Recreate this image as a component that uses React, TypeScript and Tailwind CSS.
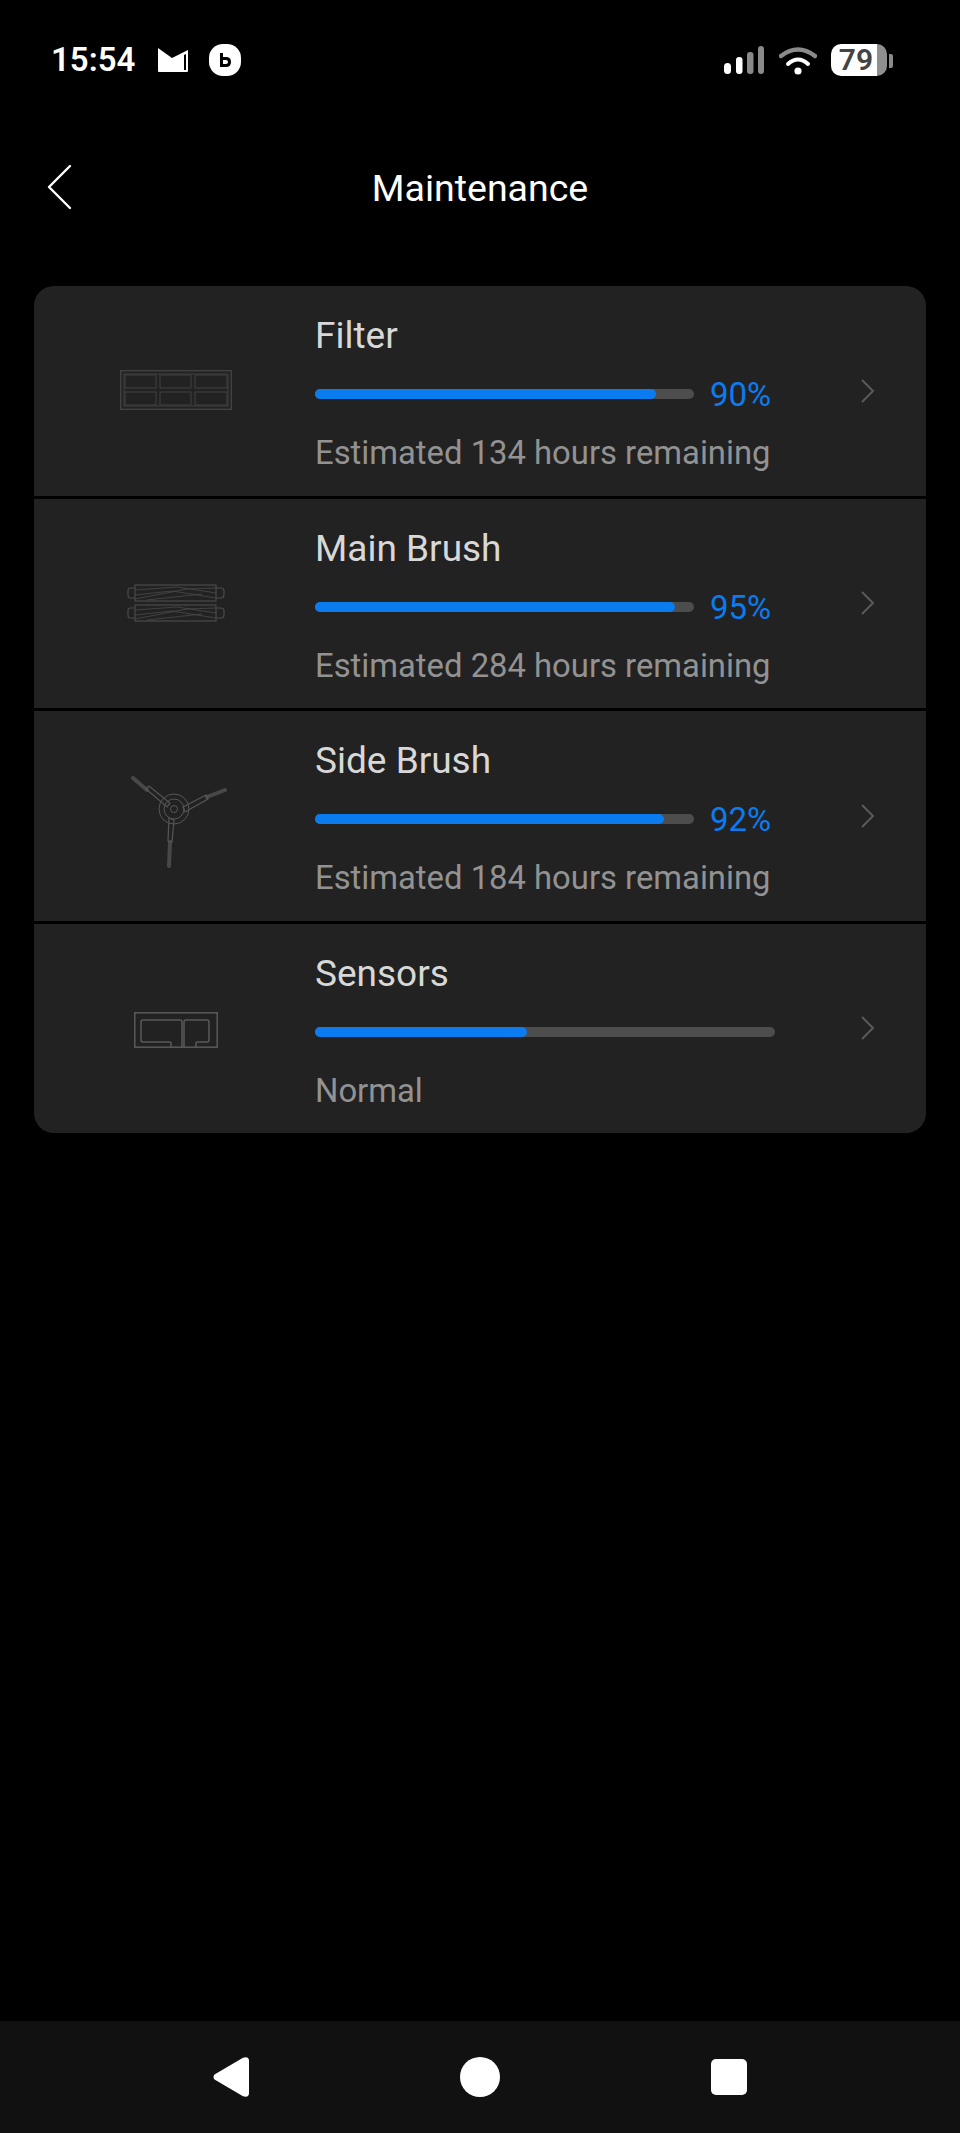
const rows = [
  { title: 'Filter', percent: 90, label: '90%', note: 'Estimated 134 hours remaining', icon: <FilterIcon /> },
  { title: 'Main Brush', percent: 95, label: '95%', note: 'Estimated 284 hours remaining', icon: <MainBrushIcon /> },
  { title: 'Side Brush', percent: 92, label: '92%', note: 'Estimated 184 hours remaining', icon: <SideBrushIcon /> },
  { title: 'Sensors', percent: 46, label: '', note: 'Normal', icon: <SensorsIcon /> },
];

function FilterIcon() {
  return (
    <svg className="mb-[2px]" width="112" height="40" viewBox="0 0 112 40" fill="none" stroke="#414141" strokeWidth="1.4">
      <rect x="0.7" y="0.7" width="110.6" height="38.6" />
      <rect x="4" y="4" width="104" height="32" strokeWidth="1" />
      <rect x="5" y="5" width="31" height="13" strokeWidth="1" />
      <rect x="40" y="5" width="31" height="13" strokeWidth="1" />
      <rect x="75" y="5" width="32" height="13" strokeWidth="1" />
      <rect x="5" y="22" width="31" height="13" strokeWidth="1" />
      <rect x="40" y="22" width="31" height="13" strokeWidth="1" />
      <rect x="75" y="22" width="32" height="13" strokeWidth="1" />
    </svg>
  );
}

function MainBrushIcon() {
  return (
    <svg width="98" height="38" viewBox="0 0 98 38" fill="none" stroke="#4a4a4a" strokeWidth="1.2">
      {[0, 20].map((y) => (
        <g key={y} transform={`translate(0 ${y})`}>
          <rect x="8" y="1" width="81" height="16" />
          <path d="M8 6 L50 3 L89 9 M8 11 L45 7 L89 14 M8 15 L60 5 L89 4 M20 16 L75 10" strokeWidth="0.8" />
          <path d="M8 4 H3 Q1 4 1 7 V11 Q1 14 3 14 H8" />
          <path d="M89 4 H94 Q97 4 97 7 V11 Q97 14 94 14 H89" />
        </g>
      ))}
    </svg>
  );
}

function SideBrushIcon() {
  return (
    <svg className="ml-[6px] mt-[13px]" width="96" height="92" viewBox="0 0 96 92" fill="none" stroke="#565656">
      <circle cx="43" cy="33" r="15" strokeWidth="1" />
      <circle cx="43" cy="33" r="10" strokeWidth="1" />
      <circle cx="43" cy="33" r="3.5" strokeWidth="1" />
      <path d="M2 2 L16 14" strokeWidth="4" stroke="#484848" strokeLinecap="round" />
      <path d="M15 13 L18 10 L39 27 L36 31 Z" strokeWidth="1.2" />
      <path d="M76 21 L94 14" strokeWidth="4" stroke="#484848" strokeLinecap="round" />
      <path d="M52 31 L75 19 L77 23 L54 36 Z" strokeWidth="1.2" />
      <path d="M39 66 L38 90" strokeWidth="4" stroke="#484848" strokeLinecap="round" />
      <path d="M38 42 L43 44 L41 66 L37 65 Z" strokeWidth="1.2" />
    </svg>
  );
}

function SensorsIcon() {
  return (
    <svg className="mt-[4px]" width="84" height="36" viewBox="0 0 84 36" fill="none" stroke="#5a5a5a" strokeWidth="1.5">
      <rect x="0.8" y="0.8" width="82.4" height="34.4" />
      <path d="M37 35 V31 Q37 30 36 30 H9 Q7 30 7 28 V10 Q7 8 9 8 H46 Q48 8 48 10 V35" />
      <path d="M50 35 V10 Q50 8 52 8 H73 Q75 8 75 10 V28 Q75 30 73 30 H63 Q62 30 62 31 V35" />
    </svg>
  );
}

function StatusBar() {
  return (
    <div className="flex h-[120px] shrink-0 items-start justify-between pl-[51px] pr-[67px] pt-[44px]">
      <div className="flex items-center">
        <span className="text-[33px] leading-[32px] font-semibold text-white">15:54</span>
        <svg className="ml-[22px]" width="32" height="26" viewBox="0 0 32 26">
          <path d="M1 1 L15 11 L31 3 V24 Q31 25 30 25 H2 Q1 25 1 24 Z" fill="#fff" />
          <path d="M27 8 L29 7 V23 H27 Z" fill="#000" />
        </svg>
        <div className="ml-[20px] flex h-[32px] w-[32px] items-center justify-center rounded-[14px] bg-white">
          <svg width="12" height="14" viewBox="0 0 12 14">
            <path d="M1 0 H4 V4 H7 Q12 4 12 9 Q12 14 7 14 H1 Z M4 7 V11 H7 Q9 11 9 9 Q9 7 7 7 Z" fill="#000" fillRule="evenodd" />
          </svg>
        </div>
      </div>
      <div className="flex items-start">
        <svg width="40" height="28" viewBox="0 0 40 28" className="mt-[2px]">
          <rect x="0" y="17" width="7" height="11" rx="3.5" fill="#fff" />
          <rect x="12" y="11" width="6.5" height="17" rx="3" fill="#fff" />
          <rect x="23" y="6" width="6.5" height="22" rx="3" fill="#8a8a8a" />
          <rect x="34" y="0" width="6" height="28" rx="3" fill="#8a8a8a" />
        </svg>
        <svg className="ml-[15px] mt-[2px]" width="38" height="29" viewBox="0 0 38 29" fill="none" strokeLinecap="round">
          <path d="M2 10 Q19 -3 36 10" stroke="#8a8a8a" strokeWidth="4.5" />
          <path d="M9 18 Q19 9 29 18" stroke="#fff" strokeWidth="4" />
          <circle cx="19" cy="25" r="3.6" fill="#fff" />
        </svg>
        <div className="ml-[14px] flex h-[32px] w-[56px]">
          <div className="flex w-[46px] items-center justify-center rounded-l-[10px] bg-white pl-[4px] text-[30px] leading-[32px] font-semibold text-[#444]">79</div>
          <div className="flex-1 rounded-r-[10px] bg-[#8f8f8f]" />
        </div>
        <div className="ml-[2px] mt-[10px] h-[14px] w-[4px] rounded-r-[2px] bg-[#8a8a8a]" />
      </div>
    </div>
  );
}

function Row({ row }: { row: (typeof rows)[number] }) {
  return (
    <div className="flex h-[209.5px] bg-[#222222]">
      <div className="flex w-[281px] items-center justify-center pl-[3px]">{row.icon}</div>
      <div className="flex w-[519px] flex-col pt-[30px]">
        <div className="h-[40px] text-[37px] leading-[40px] text-[#d8d8d8]">{row.title}</div>
        <div className="mt-[23px] flex h-[30px] items-center">
          <div className={row.label ? 'h-[10px] w-[379px] rounded-full bg-[#4d4d4d]' : 'h-[10px] w-[460px] rounded-full bg-[#4d4d4d]'}>
            <div className="h-full rounded-full bg-[#0a7cf0]" style={{ width: `${row.percent}%` }} />
          </div>
          {row.label && <span className="ml-[16px] pt-[2px] text-[33px] leading-[30px] text-[#0a7cf0]">{row.label}</span>}
        </div>
        <div className="mt-[24px] h-[40px] text-[32.8px] leading-[40px] text-[#929292]">{row.note}</div>
      </div>
      <div className="flex flex-1 items-center">
        <svg className="ml-[26px]" width="16" height="26" viewBox="0 0 16 26" fill="none" stroke="#5a5a5a" strokeWidth="2">
          <path d="M2 2 L13 13 L2 24" />
        </svg>
      </div>
    </div>
  );
}

export default function App() {
  return (
    <div className="flex h-[2133px] w-[960px] flex-col bg-black font-['Roboto',sans-serif]">
      <StatusBar />
      <div className="relative flex h-[136px] shrink-0 items-center justify-center pb-[1px]">
        <svg className="absolute left-[46px] top-[44px]" width="28" height="46" viewBox="0 0 28 46" fill="none" stroke="#fff" strokeWidth="2.4" strokeLinecap="round" strokeLinejoin="round">
          <path d="M24 2 L3 23 L24 44" />
        </svg>
        <span className="text-[37.5px] leading-[44px] text-white">Maintenance</span>
      </div>
      <div className="mx-[34px] mt-[30px] flex flex-col gap-[3px] overflow-hidden rounded-[20px]">
        {rows.map((row) => (
          <Row key={row.title} row={row} />
        ))}
      </div>
      <div className="mt-auto flex h-[112px] items-center justify-center bg-[#111111]">
        <div className="flex items-center gap-[211px]">
          <svg width="36" height="40" viewBox="0 0 36 40">
            <path d="M1.5 17.5 L30 0.8 Q36 -1 36 4 V36 Q36 41 30 39.2 L1.5 22.5 Q-0.5 20 1.5 17.5 Z" fill="#fff" />
          </svg>
          <div className="h-[40px] w-[40px] rounded-full bg-white" />
          <div className="h-[36px] w-[36px] rounded-[5px] bg-white" />
        </div>
      </div>
    </div>
  );
}
